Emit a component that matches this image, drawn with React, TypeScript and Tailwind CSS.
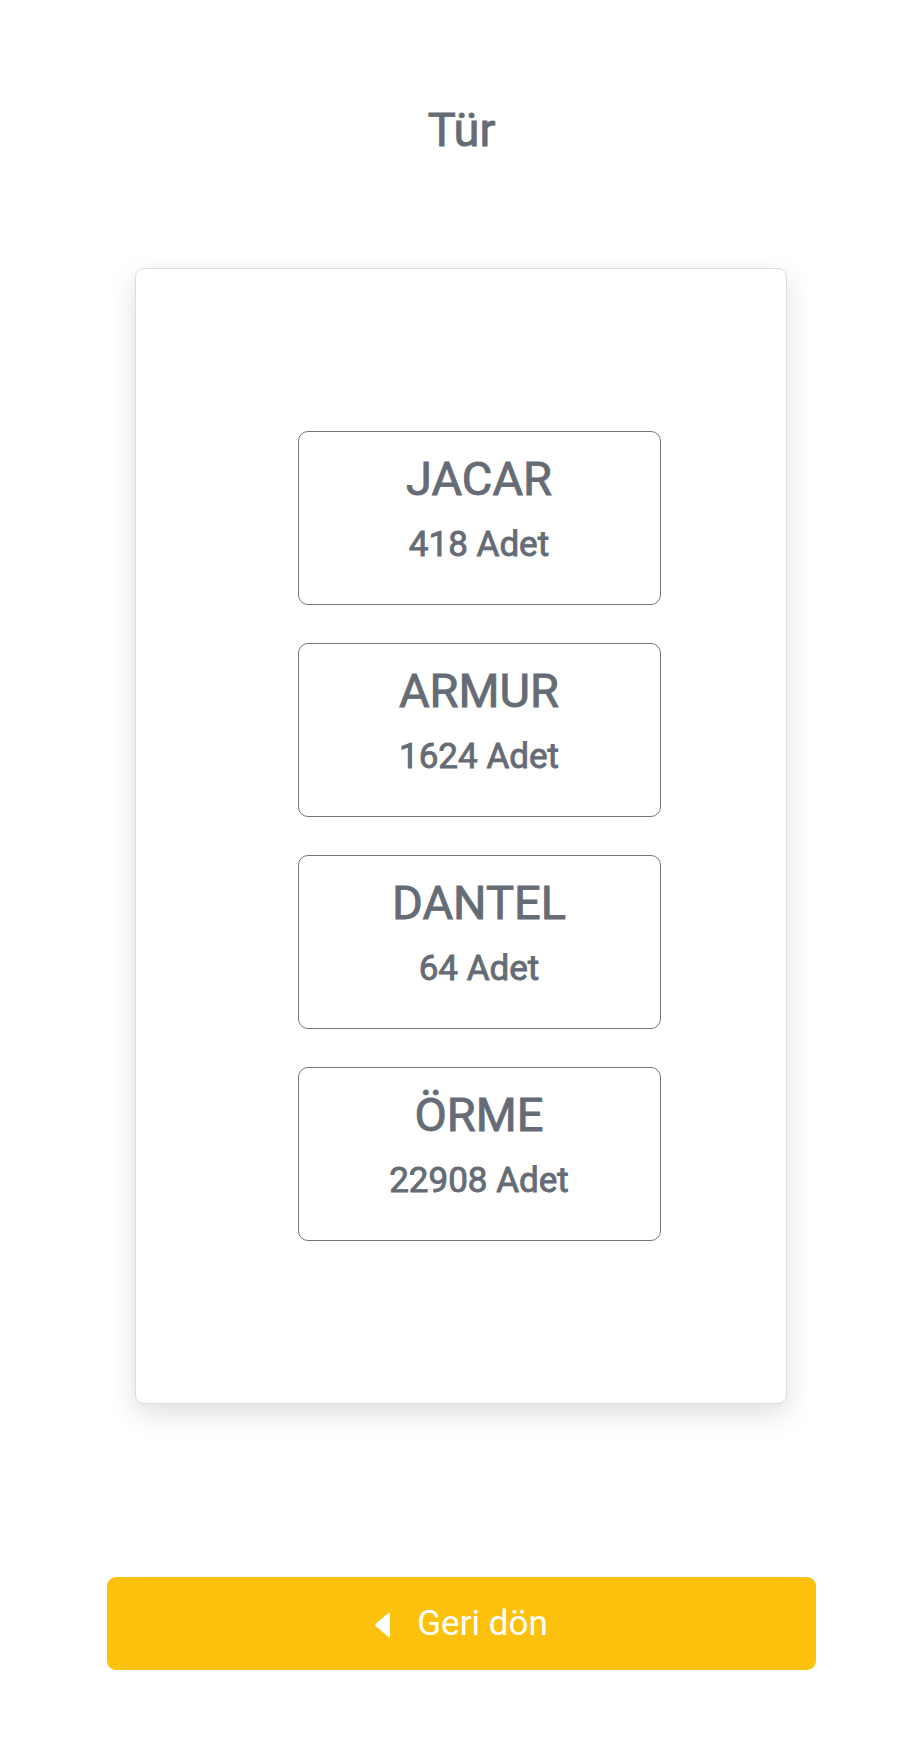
import React from "react";

const items = [
  { name: "JACAR", count: "418 Adet" },
  { name: "ARMUR", count: "1624 Adet" },
  { name: "DANTEL", count: "64 Adet" },
  { name: "ÖRME", count: "22908 Adet" },
];

export default function App() {
  return (
    <div
      className="w-[921px] h-[1738px] bg-white flex flex-col items-center"
      style={{ fontFamily: "Roboto, 'Noto Sans', sans-serif" }}
    >
      <div className="pt-[103px] h-[268px] w-full flex justify-center">
        <h1 className="text-[47px] leading-[54px] font-normal text-[#656c75] pl-[2px] [-webkit-text-stroke:0.9px_#656c75]">Tür</h1>
      </div>
      <div className="w-[652px] h-[1136px] bg-white border border-[#dcdcdc] rounded-[9px] shadow-[0_10px_28px_rgba(0,0,0,0.13)] flex flex-col justify-center pl-[162px] gap-[38px]">
        {items.map((it) => (
          <div
            key={it.name}
            className="w-[363px] h-[174px] border-[1.5px] border-[#70757b] rounded-[10px] flex flex-col items-center pt-[20px]"
          >
            <div className="text-[47px] leading-[54px] text-[#656c75] [-webkit-text-stroke:0.9px_#656c75]">{it.name}</div>
            <div className="text-[35px] leading-[40px] text-[#656c75] mt-[19px] [-webkit-text-stroke:0.9px_#656c75]">{it.count}</div>
          </div>
        ))}
      </div>
      <div className="h-[173px]" />
      <button className="w-[709px] h-[93px] bg-[#fcc10c] rounded-[9px] flex items-center justify-center gap-[25px] ml-[1px]">
        <svg width="18" height="26" viewBox="0 0 18 26" className="mt-[2px]">
          <path d="M16 2 L16 24 Q16 26 14.5 25 L2 14.5 Q0.5 13 2 11.5 L14.5 1 Q16 0 16 2 Z" fill="#ffffff" />
        </svg>
        <span className="text-[35px] leading-[40px] text-white">Geri dön</span>
      </button>
    </div>
  );
}
